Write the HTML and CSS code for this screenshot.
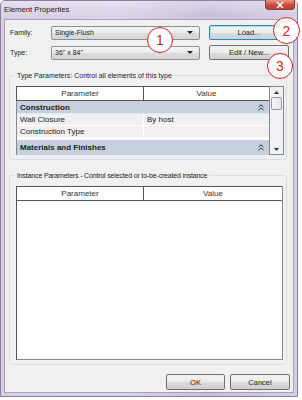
FILE: index.html
```html
<!DOCTYPE html>
<html>
<head>
<meta charset="utf-8">
<link rel="stylesheet" href="styles.css">
</head>
<body>
<div class="window">
  <div class="titlebar">
    <span class="title">Element Properties</span>
    <span class="close"><svg width="12" height="8" viewBox="0 0 12 8"><path d="M3 1 L9 7 M9 1 L3 7" stroke="#fff" stroke-width="1.6"/></svg></span>
  </div>
  <div class="client">
    <div class="row">
      <span class="lbl">Family:</span>
      <div class="combo"><span>Single-Flush</span><span class="arrow"></span></div>
      <div class="btn btn-focus">Load...</div>
    </div>
    <div class="row row2">
      <span class="lbl">Type:</span>
      <div class="combo"><span>36" x 84"</span><span class="arrow"></span></div>
      <div class="btn">Edit / New...</div>
    </div>

    <fieldset class="group g1">
      <legend>Type Parameters: Control all elements of this type</legend>
      <div class="grid">
        <div class="gtable">
          <div class="hdr"><div class="hc c1">Parameter</div><div class="hc c2">Value</div></div>
          <div class="grp">Construction<svg class="chev" width="6" height="7" viewBox="0 0 6 7"><path d="M0.5 3 L3 0.8 L5.5 3 M0.5 6.2 L3 4 L5.5 6.2" stroke="#333" fill="none" stroke-width="1"/></svg></div>
          <div class="drow"><div class="dc c1">Wall Closure</div><div class="dc c2">By host</div></div>
          <div class="drow"><div class="dc c1">Construction Type</div><div class="dc c2"></div></div>
          <div class="sep"></div>
          <div class="grp grp2">Materials and Finishes<svg class="chev" width="6" height="7" viewBox="0 0 6 7"><path d="M0.5 3 L3 0.8 L5.5 3 M0.5 6.2 L3 4 L5.5 6.2" stroke="#333" fill="none" stroke-width="1"/></svg></div>
        </div>
        <div class="scroll">
          <div class="sarrow"><svg width="5" height="3" viewBox="0 0 5 3"><path d="M0 3 L2.5 0 L5 3 Z" fill="#333"/></svg></div>
          <div class="thumb"></div>
          <div class="strack"></div>
          <div class="sarrow"><svg width="5" height="3" viewBox="0 0 5 3"><path d="M0 0 L2.5 3 L5 0 Z" fill="#333"/></svg></div>
        </div>
      </div>
    </fieldset>

    <fieldset class="group g2">
      <legend>Instance Parameters - Control selected or to-be-created instance</legend>
      <div class="itable">
        <div class="hdr"><div class="hc c1">Parameter</div><div class="hc c2 wide">Value</div></div>
        <div class="ibody"></div>
      </div>
    </fieldset>

    <div class="footer">
      <div class="btn fbtn">OK</div>
      <div class="btn fbtn cancel">Cancel</div>
    </div>
  </div>

  <div class="callout n1">1</div>
  <div class="callout n2">2</div>
  <div class="callout n3">3</div>
</div>
</body>
</html>
```
FILE: styles.css
```css
* { box-sizing: border-box; }
body {
  margin: 0;
  background: #fff;
  font-family: "Liberation Sans", Arial, sans-serif;
  font-size: 7px;
  color: #222;
}
.window {
  position: relative;
  width: 298px;
  height: 397px;
  border: 1px solid #8d7ea3;
  border-radius: 5px 5px 0 0;
  background: linear-gradient(90deg, #d9cfe4 0%, #ddd2e8 40%, #cbbfdc 70%, #d7cde3 100%);
  padding: 0 3px 3px 3px;
  display: flex;
  flex-direction: column;
}
.titlebar {
  height: 18px;
  flex: none;
  display: flex;
  align-items: center;
  justify-content: space-between;
  background: linear-gradient(180deg, rgba(255,255,255,0.35), rgba(255,255,255,0) 80%);
  margin: 0 -3px;
  padding: 0 2px 0 3px;
}
.title {
  font-size: 7.7px;
  color: #1a1a1a;
  margin-top: -1px;
}
.close {
  align-self: flex-start;
  width: 30px;
  height: 10px;
  margin-top: -1px;
  border: 1px solid #8a3b33;
  border-top: none;
  border-radius: 0 0 4px 4px;
  background: linear-gradient(180deg, #e59a8a 0%, #c9503c 50%, #b8402c 100%);
  display: flex;
  align-items: center;
  justify-content: center;
}
.client {
  flex: 1;
  background: #f0f0f0;
  border: 1px solid #a89eb6;
  padding: 5px 0 0 5px;
  display: flex;
  flex-direction: column;
}
.row {
  display: flex;
  align-items: center;
  height: 15px;
}
.row2 { margin-top: 5px; }
.lbl {
  width: 41px;
  flex: none;
}
.combo {
  width: 149px;
  height: 14px;
  border: 1px solid #8e8f8f;
  border-radius: 2px;
  background: linear-gradient(180deg, #f4f4f4 0%, #ebebeb 50%, #dcdcdc 51%, #d6d6d6 100%);
  display: flex;
  align-items: center;
  justify-content: space-between;
  padding: 0 6px 0 3px;
}
.arrow {
  width: 0;
  height: 0;
  border-left: 3px solid transparent;
  border-right: 3px solid transparent;
  border-top: 3px solid #222;
}
.btn {
  width: 80px;
  height: 15px;
  margin-left: 9px;
  border: 1px solid #707070;
  border-radius: 2px;
  background: linear-gradient(180deg, #f2f2f2 0%, #ebebeb 50%, #dddddd 51%, #cfcfcf 100%);
  display: flex;
  align-items: center;
  justify-content: center;
  color: #222;
  font-size: 7.5px;
}
.btn-focus {
  border-color: #3c7fb1;
  box-shadow: inset 0 0 0 1px #a8e0f6;
}
.group {
  margin: 10px 6px 0 -1px;
  padding: 0 0 4px 6px;
  border: 1px solid #d5dfe5;
  border-radius: 3px;
  min-width: 0;
}
.group legend {
  padding: 0 2px;
  margin-left: -1px;
  line-height: 9px;
  color: #222;
}
.g1 { margin-top: 11px; }
.grid {
  display: flex;
  height: 69px;
  border: 1px solid #828790;
  margin-top: 6px;
  width: 268px;
}
.gtable {
  width: 253px;
  flex: none;
  background: #fff;
  display: flex;
  flex-direction: column;
  border-right: 1px solid #828790;
  font-size: 8px;
}
.hdr {
  display: flex;
  height: 15px;
  border-bottom: 1px solid #555;
  border-top: 1px solid #555;
  border-left: 1px solid #555;
  margin: -1px 0 0 -1px;
  background: #fff;
  flex: none;
  font-size: 8px;
}
.hc {
  display: flex;
  align-items: center;
  justify-content: center;
  color: #333;
}
.c1 { width: 127px; flex: none; border-right: 1px solid #555; }
.c2 { flex: 1; }
.grp {
  height: 13px;
  flex: none;
  background: #c4d0de;
  font-weight: bold;
  color: #222;
  display: flex;
  align-items: center;
  justify-content: space-between;
  padding: 0 5px 0 3px;
  border-bottom: 1px solid #e3e8ee;
}
.grp2 { height: 15px; border-bottom: none; }
.drow {
  height: 12px;
  flex: none;
  display: flex;
  background: #f0f0f0;
  border-bottom: 1px solid #fff;
}
.dc {
  display: flex;
  align-items: center;
  padding-left: 3px;
  color: #222;
}
.drow .c1 { border-right: 1px solid #fff; }
.drow .c2 { background: #f0f0f0; }
.sep { height: 2px; flex: none; background: #fff; }
.scroll {
  flex: 1;
  background: #f3f3f3;
  display: flex;
  flex-direction: column;
  align-items: center;
}
.sarrow {
  height: 10px;
  flex: none;
  display: flex;
  align-items: center;
  justify-content: center;
}
.thumb {
  width: 11px;
  height: 13px;
  flex: none;
  border: 1px solid #9a9a9a;
  border-radius: 2px;
  background: linear-gradient(90deg, #f5f5f5, #e6e6e6);
}
.strack { flex: 1; }
.g2 { margin-top: 11px; padding-bottom: 4px; }
.g2 legend { letter-spacing: -0.17px; }
.itable {
  margin-top: 6px;
  width: 267px;
  height: 174px;
  border: 1px solid #828790;
  border-left-color: #555;
  background: #fff;
  display: flex;
  flex-direction: column;
}
.itable .hdr { height: 15px; }
.ibody { flex: 1; }
.footer {
  display: flex;
  justify-content: flex-end;
  padding-right: 3px;
  margin-top: 9px;
}
.fbtn {
  width: 59px;
  height: 16px;
  margin-left: 5px;
}
.cancel { width: 60px; }
.callout {
  position: absolute;
  width: 26px;
  height: 26px;
  border-radius: 50%;
  border: 1.5px solid #d81e1e;
  background: #fff;
  color: #d81e1e;
  font-family: "Liberation Sans", Arial, sans-serif;
  font-size: 14px;
  display: flex;
  align-items: center;
  justify-content: center;
}
.n1 { left: 146px; top: 26px; }
.n2 { left: 272px; top: 16px; width: 27px; height: 27px; }
.n3 { left: 266px; top: 52px; }
```
